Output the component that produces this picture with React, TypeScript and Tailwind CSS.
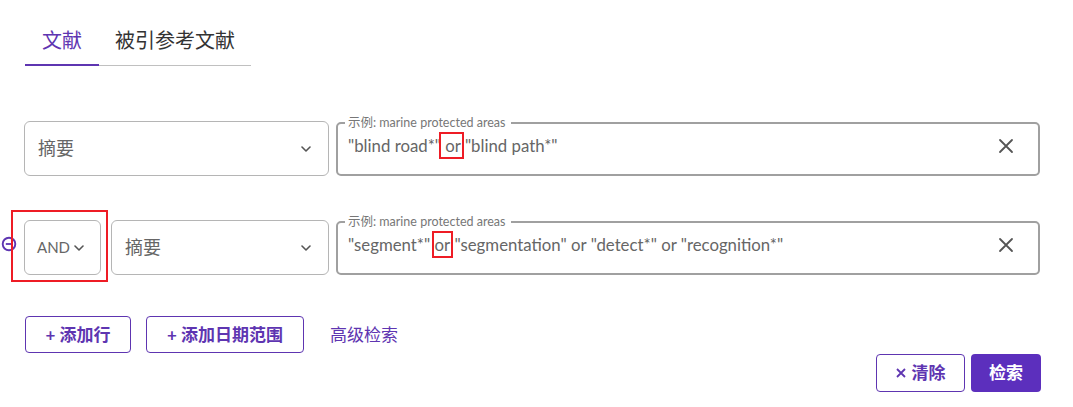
import React from "react";

function Chevron({ className = "" }: { className?: string }) {
  return (
    <svg width="10" height="6" viewBox="0 0 10 6" className={className} fill="none">
      <path d="M1 1l4 4 4-4" stroke="#555" strokeWidth="1.6" strokeLinecap="round" strokeLinejoin="round" />
    </svg>
  );
}

function XIcon() {
  return (
    <svg width="16" height="16" viewBox="0 0 16 16" fill="none">
      <path d="M2 2l12 12M14 2L2 14" stroke="#555" strokeWidth="1.8" strokeLinecap="round" />
    </svg>
  );
}

function Select({ w }: { w: string }) {
  return (
    <div className={`flex h-[55px] ${w} shrink-0 items-center justify-between rounded-[6px] border border-[#b5b5b5] pl-[13px] pr-[17px] text-[18px] text-[#666]`}>
      <span>摘要</span>
      <Chevron />
    </div>
  );
}

function Field({ children }: { children: React.ReactNode }) {
  return (
    <fieldset className="ml-[7px] h-[59px] w-[704px] min-w-0 shrink-0 rounded-[5px] border-2 border-[#a0a0a0] pl-[7px] pr-[24px]">
      <legend className="pl-[3px] pr-[6px] text-[12.5px] leading-[12px] text-[#777]">示例: marine protected areas</legend>
      <div className="mt-[4px] flex h-[26px] items-center justify-between pl-[3px]">
        <div className="whitespace-pre text-[16.8px] leading-[24px] text-[#666]">{children}</div>
        <XIcon />
      </div>
    </fieldset>
  );
}

export default function App() {
  return (
    <div className="h-[407px] w-[1073px] overflow-hidden bg-white pl-[24px] pr-[32px] pt-[28px] font-[Lato,'Noto_Sans_CJK_SC',sans-serif] text-[#666]">
      {/* Tabs */}
      <div className="ml-[1px] flex w-[226px] border-b border-[#c0c0c0]">
        <div className="-mb-px border-b-2 border-[#5e35b1] px-[17px] pb-[12px] text-[20px] leading-[24px] text-[#5e35b1]">文献</div>
        <div className="px-[16px] pb-[12px] text-[20px] leading-[24px] text-[#333]">被引参考文献</div>
      </div>

      {/* Row 1 */}
      <div className="mt-[51px] flex items-end">
        <Select w="w-[305px]" />
        <Field>
          {'"blind road*"'}
          <span className="relative">
            {" or "}
            <span className="absolute -top-[3px] -bottom-[3px] -left-[2px] right-[1px] border-2 border-[#ee1c25]" />
          </span>
          {'"blind path*"'}
        </Field>
      </div>

      {/* Row 2 */}
      <div className="relative mt-[40px] flex items-end">
        <svg className="absolute left-[-23px] top-[20px]" width="16" height="16" viewBox="0 0 16 16" fill="none">
          <circle cx="8" cy="8" r="6.3" stroke="#5e35b1" strokeWidth="1.9" />
          <path d="M4.8 8h6.4" stroke="#5e35b1" strokeWidth="1.8" />
        </svg>
        <div className="relative mr-[10px] flex h-[55px] w-[77px] shrink-0 items-center gap-[4px] rounded-[6px] border border-[#b5b5b5] pl-[12px] text-[15px] text-[#666]">
          <span>AND</span>
          <Chevron />
          <span className="absolute -top-[11px] -bottom-[8px] -left-[14px] -right-[8px] border-2 border-[#ee1c25]" />
        </div>
        <Select w="w-[218px]" />
        <Field>
          {'"segment*" '}
          <span className="relative">
            or
            <span className="absolute -top-[3px] -bottom-[3px] -left-[3px] -right-[3px] border-2 border-[#ee1c25]" />
          </span>
          {' "segmentation" or "detect*" or "recognition*"'}
        </Field>
      </div>

      {/* Buttons */}
      <div className="ml-[1px] mt-[41px] flex items-center">
        <button className="h-[37px] w-[106px] rounded-[4px] border border-[#5e35b1] text-[17px] font-bold text-[#5e35b1]">+ 添加行</button>
        <button className="ml-[15px] h-[37px] w-[158px] rounded-[4px] border border-[#5e35b1] text-[17px] font-bold text-[#5e35b1]">+ 添加日期范围</button>
        <span className="ml-[26px] text-[17px] text-[#5e35b1]">高级检索</span>
      </div>

      <div className="mt-px flex justify-end gap-[6px]">
        <button className="flex h-[38px] w-[89px] items-center justify-center gap-[6px] rounded-[4px] border border-[#5e35b1] text-[17px] font-bold text-[#5e35b1]">
          <svg width="10" height="10" viewBox="0 0 10 10" fill="none">
            <path d="M1 1l8 8M9 1L1 9" stroke="#5e35b1" strokeWidth="1.8" />
          </svg>
          <span>清除</span>
        </button>
        <button className="h-[38px] w-[70px] rounded-[4px] bg-[#5c2fbd] text-[17px] font-bold text-white">检索</button>
      </div>
    </div>
  );
}
